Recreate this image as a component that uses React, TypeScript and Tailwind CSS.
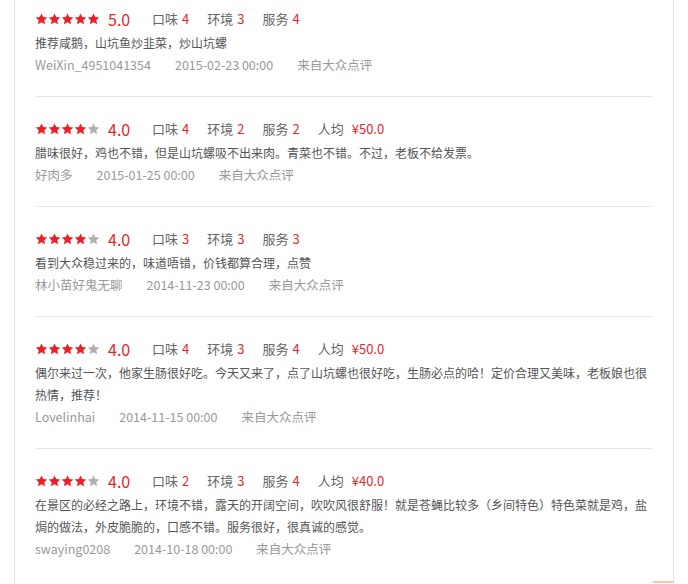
type Review = {
  id: string;
  stars: number;
  score: string;
  taste: number;
  env: number;
  service: number;
  price?: string;
  text: string;
  user: string;
  time: string;
  source: string;
};

const reviews: Review[] = [
  {
    id: "r1",
    stars: 5,
    score: "5.0",
    taste: 4,
    env: 3,
    service: 4,
    text: "推荐咸鹅，山坑鱼炒韭菜，炒山坑螺",
    user: "WeiXin_4951041354",
    time: "2015-02-23 00:00",
    source: "来自大众点评",
  },
  {
    id: "r2",
    stars: 4,
    score: "4.0",
    taste: 4,
    env: 2,
    service: 2,
    price: "¥50.0",
    text: "腊味很好，鸡也不错，但是山坑螺吸不出来肉。青菜也不错。不过，老板不给发票。",
    user: "好肉多",
    time: "2015-01-25 00:00",
    source: "来自大众点评",
  },
  {
    id: "r3",
    stars: 4,
    score: "4.0",
    taste: 3,
    env: 3,
    service: 3,
    text: "看到大众稳过来的，味道唔错，价钱都算合理，点赞",
    user: "林小苗好鬼无聊",
    time: "2014-11-23 00:00",
    source: "来自大众点评",
  },
  {
    id: "r4",
    stars: 4,
    score: "4.0",
    taste: 4,
    env: 3,
    service: 4,
    price: "¥50.0",
    text: "偶尔来过一次，他家生肠很好吃。今天又来了，点了山坑螺也很好吃，生肠必点的哈！定价合理又美味，老板娘也很热情，推荐！",
    user: "Lovelinhai",
    time: "2014-11-15 00:00",
    source: "来自大众点评",
  },
  {
    id: "r5",
    stars: 4,
    score: "4.0",
    taste: 2,
    env: 3,
    service: 4,
    price: "¥40.0",
    text: "在景区的必经之路上，环境不错，露天的开阔空间，吹吹风很舒服！就是苍蝇比较多（乡间特色）特色菜就是鸡，盐焗的做法，外皮脆脆的，口感不错。服务很好，很真诚的感觉。",
    user: "swaying0208",
    time: "2014-10-18 00:00",
    source: "来自大众点评",
  },
];

function Star({ on }: { on: boolean }) {
  return (
    <svg width="13" height="12" viewBox="0 0 24 23" className="shrink-0">
      <path
        d="M12 0.8l3.3 7.1 7.8 0.9-5.8 5.3 1.6 7.7L12 17.9l-6.9 3.9 1.6-7.7L0.9 8.8l7.8-0.9z"
        fill={on ? "#ec2128" : "#b0b0b0"}
      />
    </svg>
  );
}

function Stat({ label, value, wide }: { label: string; value: string | number; wide?: boolean }) {
  return (
    <span className="mr-[18px] flex items-center text-[13px]">
      <span className="text-[#666]">{label}</span>
      <span className={`${wide ? "ml-[8px]" : "ml-[4px]"} text-[#e4262b]`}>{value}</span>
    </span>
  );
}

function ReviewItem({ review }: { review: Review }) {
  return (
    <li className="border-b border-[#e8e8e8] pb-5 pt-[22px] first:pt-[9px] last:border-b-0">
      <div className="flex h-5 items-center">
        <div className="flex">
          {[0, 1, 2, 3, 4].map((i) => (
            <Star key={i} on={i < review.stars} />
          ))}
        </div>
        <span className="ml-[8px] w-[44px] text-[16px] leading-5 text-[#e4262b]">
          {review.score}
        </span>
        <Stat label="口味" value={review.taste} />
        <Stat label="环境" value={review.env} />
        <Stat label="服务" value={review.service} />
        {review.price && <Stat label="人均" value={review.price} wide />}
      </div>
      <p className="mt-[3px] text-[12px] leading-[22px] text-[#555]">{review.text}</p>
      <div className="flex gap-6 text-[12.5px] leading-[22px] text-[#999]">
        <span>{review.user}</span>
        <span>{review.time}</span>
        <span>{review.source}</span>
      </div>
    </li>
  );
}

export default function App() {
  return (
    <div
      className="relative h-[584px] overflow-hidden bg-white"
      style={{ fontFamily: '"Noto Sans CJK SC", "Noto Sans", sans-serif' }}
    >
      <div className="ml-[14px] h-full w-[660px] border-x border-[#e6e6e6] px-5">
        <ul>
          {reviews.map((r) => (
            <ReviewItem key={r.id} review={r} />
          ))}
        </ul>
      </div>
      <div className="absolute left-[653px] top-[581px] h-4 w-[20px] border-t-2 border-[#f5c9a6]" />
    </div>
  );
}
